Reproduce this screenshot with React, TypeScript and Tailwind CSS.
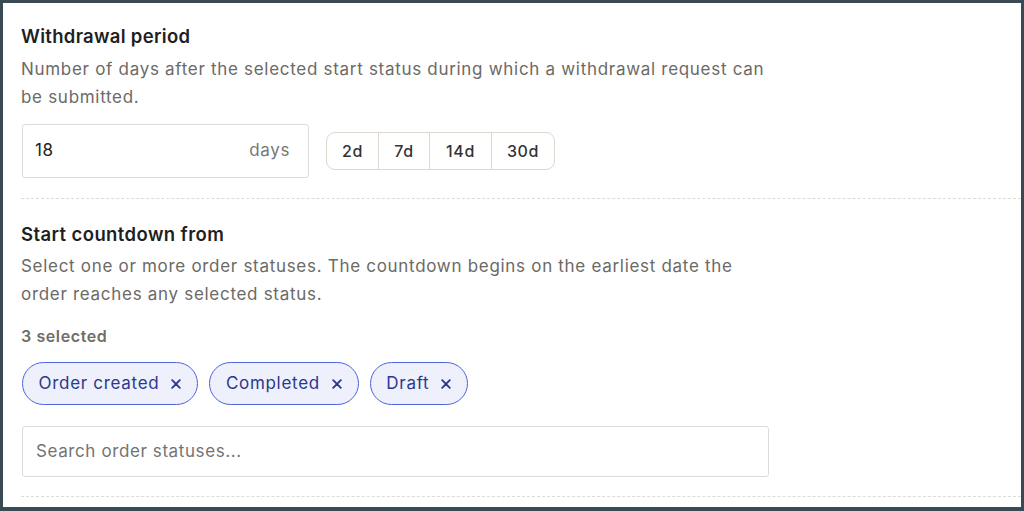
import React from "react";

const XIcon = () => (
  <svg width="10" height="10" viewBox="0 0 10 10" className="shrink-0">
    <path d="M1.2 1.2 L8.8 8.8 M8.8 1.2 L1.2 8.8" stroke="#2b3890" strokeWidth="1.9" strokeLinecap="round" />
  </svg>
);

const Chip = ({ label }: { label: string }) => (
  <div className="flex h-[43px] items-center gap-[12px] rounded-full border-[1.5px] border-[#4f63dc] bg-[#eef0fb] pl-[15.5px] pr-[16px] text-[17px] tracking-[0.7px] text-[#2b3890]">
    <span>{label}</span>
    <XIcon />
  </div>
);

export default function App() {
  return (
    <div
      className="h-[511px] w-[1024px] overflow-hidden border-[3px] border-b-[4px] border-[#3a4a52] bg-white"
      style={{ fontFamily: "Inter, 'Noto Sans', sans-serif" }}
    >
      <div className="pl-[18px]">
        {/* Section 1 */}
        <div className="pt-[21px] pb-[20px] border-b border-dashed border-[#dedbd2]">
          <h2 className="text-[18.5px] leading-[24px] font-semibold tracking-[0.3px] text-[#1f1f1f]">Withdrawal period</h2>
          <p className="mt-[7px] max-w-[750px] text-[17px] leading-[28px] tracking-[0.7px] text-[#6b6a66]">
            Number of days after the selected start status during which a withdrawal request can be submitted.
          </p>
          <div className="mt-[13px] flex items-center gap-[17px]">
            <div className="ml-[1px] flex h-[54px] w-[287px] items-center justify-between rounded-[3px] border border-[#dcdcdc] pl-[12px] pr-[18px]">
              <span className="text-[17px] tracking-[0.5px] text-[#222]">18</span>
              <span className="text-[17px] tracking-[0.6px] text-[#777]">days</span>
            </div>
            <div className="flex h-[38px] overflow-hidden rounded-[9px] border border-[#dcd8d0] text-[16px] font-medium tracking-[0.6px] text-[#333]">
              <div className="flex w-[52px] items-center justify-center border-r border-[#dcd8d0]">2d</div>
              <div className="flex w-[51px] items-center justify-center border-r border-[#dcd8d0]">7d</div>
              <div className="flex w-[62px] items-center justify-center border-r border-[#dcd8d0]">14d</div>
              <div className="flex w-[62px] items-center justify-center">30d</div>
            </div>
          </div>
        </div>

        {/* Section 2 */}
        <div className="pt-[23px] pb-[19px] border-b border-dashed border-[#dedbd2]">
          <h2 className="text-[18.5px] leading-[24px] font-semibold tracking-[0.4px] text-[#1f1f1f]">Start countdown from</h2>
          <p className="mt-[6px] max-w-[750px] text-[17px] leading-[28px] tracking-[0.7px] text-[#6b6a66]">
            Select one or more order statuses. The countdown begins on the earliest date the order reaches any selected status.
          </p>
          <div className="mt-[17px] text-[16px] leading-[22px] font-semibold tracking-[0.6px] text-[#6f6e69]">3 selected</div>
          <div className="mt-[15px] ml-[1px] flex gap-[11px]">
            <Chip label="Order created" />
            <Chip label="Completed" />
            <Chip label="Draft" />
          </div>
          <div className="mt-[21px] ml-[1px] flex h-[51px] w-[747px] items-center rounded-[3px] border border-[#dcdcdc] pl-[13px] text-[17px] tracking-[0.6px] text-[#737373]">
            Search order statuses...
          </div>
        </div>
      </div>
    </div>
  );
}
